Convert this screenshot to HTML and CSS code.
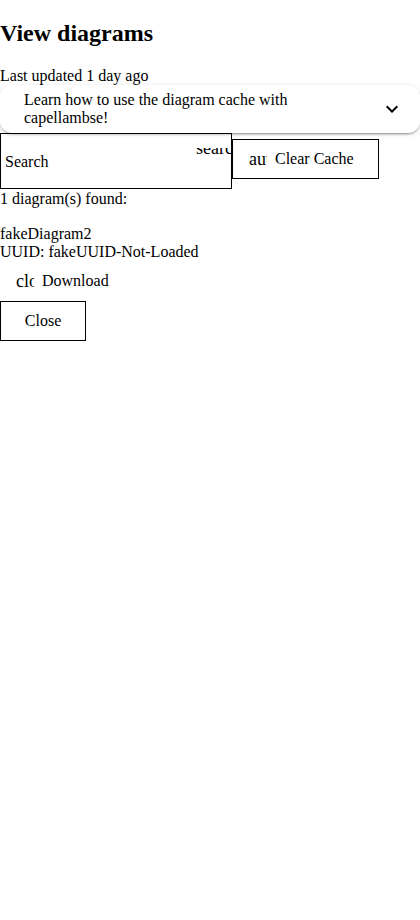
FILE: index.html
```html
<!DOCTYPE html>
<html lang="en">
<head>
<meta charset="utf-8">
<title>View diagrams</title>
<link rel="stylesheet" href="styles.css">
</head>
<body>
<h2 class="title">View diagrams</h2>
<div class="updated">Last updated 1 day ago</div>
<div class="panel">
  <div class="panel-header">
    <span class="panel-title">Learn how to use the diagram cache with capellambse!</span>
    <svg class="chevron" width="24" height="24" viewBox="0 0 24 24" aria-hidden="true"><path d="M7.41 8.59 12 13.17l4.59-4.58L18 10l-6 6-6-6z"/></svg>
  </div>
</div>
<div class="toolbar">
  <div class="search-field">
    <span class="search-label">Search</span>
    <span class="search-icon"><span class="search-icon-text">search</span></span>
  </div>
  <button class="btn btn-outline btn-clear"><span class="icon">autorenew</span>Clear Cache</button>
</div>
<div class="count">1 diagram(s) found:</div>
<div class="diagram">
  <div>fakeDiagram2</div>
  <div>UUID: fakeUUID-Not-Loaded</div>
</div>
<div class="actions">
  <button class="btn btn-plain btn-download"><span class="icon">cloud_download</span>Download</button>
</div>
<div class="actions">
  <button class="btn btn-outline btn-close">Close</button>
</div>
</body>
</html>
```
FILE: styles.css
```css
html, body {
  background: #fff;
}
body {
  margin: 0;
  font-family: "Liberation Serif", "Times New Roman", serif;
  font-size: 16px;
  color: #000;
}
.title {
  font-size: 24px;
  font-weight: bold;
  margin: 19.92px 0;
}
.updated {
  line-height: normal;
}
.panel {
  background: #fff;
  border-radius: 12px;
  box-shadow: 0 3px 1px -2px rgba(0,0,0,.2), 0 2px 2px 0 rgba(0,0,0,.14), 0 1px 5px 0 rgba(0,0,0,.12);
  position: relative;
  z-index: 1;
}
.panel-header {
  height: 48px;
  display: flex;
  align-items: center;
  padding: 0 16px 0 24px;
}
.panel-title {
  width: 300px;
  flex: 0 0 auto;
}
.chevron {
  margin-left: auto;
  display: block;
  fill: #000;
}
.toolbar {
  display: flex;
  align-items: flex-start;
}
.search-field {
  box-sizing: border-box;
  width: 232px;
  height: 56px;
  border: 1px solid #000;
  display: flex;
  align-items: flex-start;
  overflow: hidden;
  flex-shrink: 0;
}
.search-label {
  flex: 1 1 auto;
  align-self: center;
  padding-left: 4px;
  padding-top: 3px;
}
.search-icon {
  flex: 0 0 46px;
  width: 46px;
  height: 7px;
  margin-top: 14px;
  margin-right: -11px;
  overflow: hidden;
}
.search-icon-text {
  display: block;
  font-size: 18px;
  line-height: 18px;
  margin-top: -9px;
  white-space: nowrap;
}
.btn {
  font-family: "Liberation Serif", "Times New Roman", serif;
  font-size: 16px;
  color: #000;
  background: transparent;
  height: 40px;
  display: inline-flex;
  align-items: center;
  margin: 0;
  cursor: pointer;
  box-sizing: border-box;
}
.btn-outline {
  border: 1px solid #000;
  padding: 0 24px 0 16px;
}
.btn-plain {
  border: 0;
  padding: 0 24px 0 16px;
}
.btn-clear {
  margin-top: 6px;
  width: 147px;
}
.btn-download {
  height: 40px;
}
.btn-close {
  padding: 0 24px;
  width: 86px;
  justify-content: center;
}
.icon {
  display: inline-block;
  width: 18px;
  height: 20px;
  overflow: hidden;
  white-space: nowrap;
  font-size: 18px;
  line-height: 20px;
  margin-right: 8px;
  flex-shrink: 0;
}
.count {
  margin-top: 1px;
}
.diagram {
  margin-top: 17px;
}
.actions {
  display: block;
}
```
